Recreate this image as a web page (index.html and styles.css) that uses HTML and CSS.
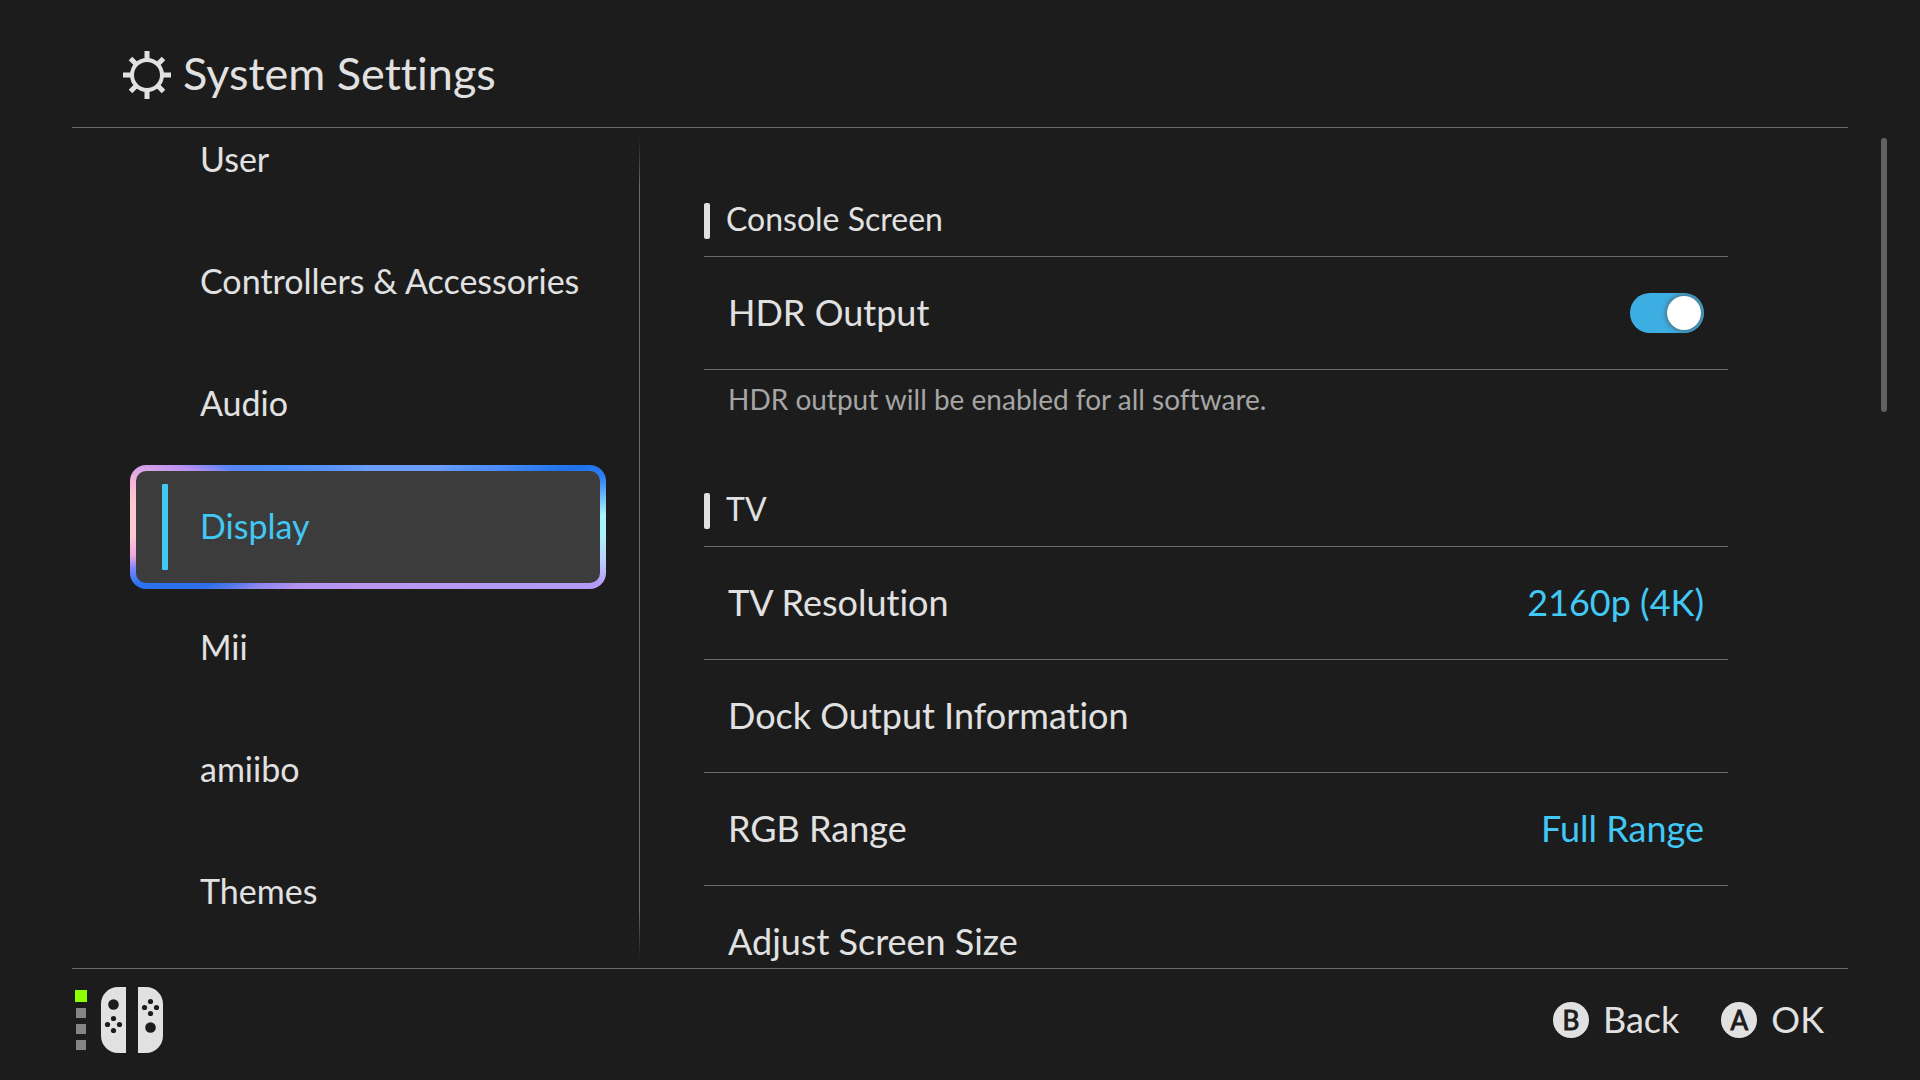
FILE: index.html
```
<!DOCTYPE html>
<html lang="en">
<head>
  <meta charset="UTF-8">
  <title>System Settings</title>
  <link rel="stylesheet" href="styles.css">
</head>
<body>
  <header class="header">
    <svg class="header-icon" viewBox="0 0 48 48" aria-hidden="true">
      <circle cx="24" cy="24" r="15"/>
      <path d="M24 0v9M24 39v9M0 24h9M39 24h9M7.500 7.500l6 6M34.500 34.500l6 6M40.500 7.500l-6 6M13.500 34.500l-6 6"/>
    </svg>
    <h1>System Settings</h1>
  </header>

  <div class="content">
    <nav class="sidebar">
      <a class="nav-item" href="#user">User</a>
      <a class="nav-item" href="#controllers">Controllers &amp; Accessories</a>
      <a class="nav-item" href="#audio">Audio</a>
      <a class="nav-item selected" href="#display">Display</a>
      <a class="nav-item" href="#mii">Mii</a>
      <a class="nav-item" href="#amiibo">amiibo</a>
      <a class="nav-item" href="#themes">Themes</a>
    </nav>
    <div class="divider"></div>

    <main class="panel">
      <section>
        <h2 class="section-title">Console Screen</h2>
        <label class="row" for="hdr">
          <span>HDR Output</span>
          <input class="toggle" type="checkbox" id="hdr" checked>
        </label>
        <p class="note">HDR output will be enabled for all software.</p>
      </section>

      <section>
        <h2 class="section-title">TV</h2>
        <button class="row"><span>TV Resolution</span><span class="value">2160p (4K)</span></button>
        <button class="row"><span>Dock Output Information</span></button>
        <button class="row"><span>RGB Range</span><span class="value">Full Range</span></button>
        <button class="row"><span>Adjust Screen Size</span></button>
      </section>
    </main>
    <div class="scrollbar"></div>
  </div>

  <footer class="footer">
    <div class="controller">
      <div class="players">
        <span class="led on"></span>
        <span class="led"></span>
        <span class="led"></span>
        <span class="led"></span>
      </div>
      <svg class="joycons" viewBox="0 0 62 66" aria-hidden="true">
        <path class="shell" d="M25 0v66H17A17 17 0 0 1 0 49V17A17 17 0 0 1 17 0z"/>
        <path class="shell" d="M37 0v66h8a17 17 0 0 0 17-17V17A17 17 0 0 0 45 0z"/>
        <circle cx="12.500" cy="17.500" r="5.300"/>
        <circle cx="12.500" cy="31.500" r="2.600"/>
        <circle cx="6.500" cy="37.500" r="2.600"/>
        <circle cx="18.500" cy="37.500" r="2.600"/>
        <circle cx="12.500" cy="43.500" r="2.600"/>
        <circle cx="49.500" cy="14.500" r="2.600"/>
        <circle cx="43.500" cy="20.500" r="2.600"/>
        <circle cx="55.500" cy="20.500" r="2.600"/>
        <circle cx="49.500" cy="26.500" r="2.600"/>
        <circle cx="49.500" cy="40.500" r="5.300"/>
      </svg>
    </div>
    <div class="actions">
      <button class="action"><span class="key">B</span><span>Back</span></button>
      <button class="action"><span class="key">A</span><span>OK</span></button>
    </div>
  </footer>
</body>
</html>
```

FILE: styles.css
```
* {
  box-sizing: border-box;
}
body {
  margin: 0;
  height: 100vh;
  display: flex;
  flex-direction: column;
  overflow: hidden;
  background: #1c1c1c;
  color: #e1e1e1;
  font-family: Lato, "Noto Sans", sans-serif;
  font-variant-ligatures: none;
}
h1, h2, p {
  margin: 0;
  font-weight: 400;
}
button {
  border: none;
  background: none;
  color: inherit;
  font-family: inherit;
  font-variant-ligatures: inherit;
  cursor: pointer;
}

/* header */
.header {
  display: flex;
  align-items: center;
  gap: 12px;
  height: 128px;
  flex-shrink: 0;
  margin: 0 72px;
  padding: 22px 51px 0;
  border-bottom: 1px solid #6b6b6b;
}
.header-icon {
  width: 48px;
  height: 48px;
  fill: none;
  stroke: #e1e1e1;
  stroke-width: 4;
}
.header-icon path {
  stroke-width: 5;
}
.header h1 {
  padding-bottom: 4px;
  font-size: 45px;
  line-height: 60px;
}

/* content */
.content {
  flex: 1;
  min-height: 0;
  display: flex;
  padding-left: 130px;
  overflow: hidden;
}
.sidebar {
  width: 476px;
  flex-shrink: 0;
  margin-top: -29px;
}
.nav-item {
  display: flex;
  align-items: center;
  height: 122px;
  padding: 0 0 4px 70px;
  color: #e1e1e1;
  font-size: 34px;
  text-decoration: none;
}
.nav-item.selected {
  height: 124px;
  margin-bottom: -2px;
  padding-left: 26px;
  gap: 32px;
  border: 6px solid transparent;
  border-radius: 16px;
  color: #41c8f5;
  background:
    linear-gradient(#3c3c3c, #3c3c3c) padding-box,
    conic-gradient(#6b9dfb, #6b9dfb 50deg, #4b8cf5 66deg, #1f72ea 74deg, #2f80f5 78deg,
      #a9f3fb 87deg, #a9f3fb 92deg, #bcd0ff 98deg, #b39af5 104deg, #bb96f0 180deg,
      #b393f2 230deg, #8f86f0 242deg, #2d6fe8 250deg, #2a72f0 256deg,
      #7d84f8 260deg, #f0a8e0 263deg, #ffc8d0 268deg, #ffc8d0 276deg, #f5b5dd 281deg,
      #b890f0 288deg, #5a85f5 293deg, #4b8cf5 300deg, #6b9dfb) border-box;
}
.nav-item.selected::before {
  content: "";
  width: 6px;
  height: 86px;
  margin-top: 4px;
  border-radius: 1px;
  background: #41c8f5;
}
.divider {
  width: 1px;
  margin: 10px 64px 10px 33px;
  background: linear-gradient(transparent, #6b6b6b 50px, #6b6b6b calc(100% - 50px), transparent);
}
.panel {
  flex: 1;
  padding-top: 75px;
}
.section-title {
  display: flex;
  align-items: flex-start;
  gap: 16px;
  height: 54px;
  border-bottom: 1px solid #6b6b6b;
  font-size: 32px;
  line-height: 32px;
}
.section-title::before {
  content: "";
  width: 6px;
  height: 36px;
  border-radius: 2px;
  background: #e1e1e1;
}
.row {
  display: flex;
  align-items: center;
  justify-content: space-between;
  width: 100%;
  height: 113px;
  padding: 0 24px 2px;
  border-bottom: 1px solid #6b6b6b;
  font-size: 36px;
}
.value {
  color: #41c8f5;
}
.note {
  height: 123px;
  padding: 9px 24px 0;
  color: #a5a5a5;
  font-size: 28px;
  line-height: 40px;
}
.toggle {
  appearance: none;
  width: 74px;
  height: 40px;
  margin: 2px 0 0;
  padding: 3px;
  border-radius: 20px;
  background: #808080;
  cursor: pointer;
}
.toggle::before {
  content: "";
  display: block;
  width: 34px;
  height: 34px;
  border-radius: 50%;
  background: #fff;
  box-shadow: 0 0 5px 1px rgba(80, 80, 80, 0.8);
}
.toggle:checked {
  background: #3daee2;
  overflow: hidden;
}
.toggle:checked::before {
  margin-left: 34px;
}
.scrollbar {
  width: 6px;
  height: 274px;
  margin: 10px 33px 0 153px;
  border-radius: 3px;
  background: #616161;
}

/* footer */
.footer {
  display: flex;
  align-items: center;
  justify-content: space-between;
  height: 112px;
  flex-shrink: 0;
  margin: 0 72px;
  padding: 0 24px 9px 3px;
  border-top: 1px solid #6b6b6b;
}
.controller {
  display: flex;
  align-items: center;
  gap: 14px;
}
.players {
  display: flex;
  flex-direction: column;
  align-items: center;
  gap: 6px;
}
.led {
  width: 10px;
  height: 10px;
  background: #858585;
}
.led.on {
  width: 12px;
  height: 12px;
  background: #8cff00;
}
.joycons {
  width: 62px;
  height: 66px;
  fill: #1c1c1c;
}
.shell {
  fill: #e1e1e1;
}
.actions {
  display: flex;
  gap: 42px;
}
.action {
  display: flex;
  align-items: center;
  gap: 14px;
  padding: 0;
  font-size: 36px;
  line-height: 40px;
}
.action span:last-child {
  padding-bottom: 2px;
}
.key {
  width: 36px;
  height: 36px;
  border-radius: 50%;
  background: #e1e1e1;
  color: #1c1c1c;
  font-size: 26px;
  line-height: 36px;
  -webkit-text-stroke: 1px #1c1c1c;
}
```
